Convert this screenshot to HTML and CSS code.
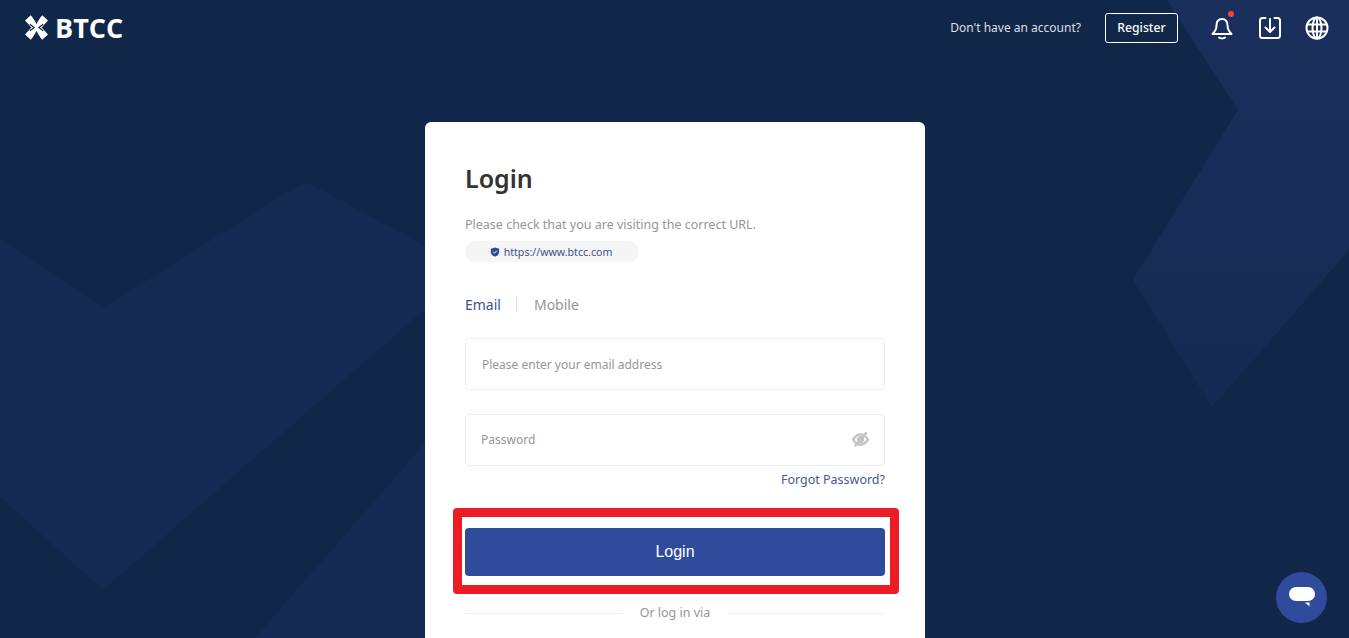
FILE: index.html
```html
<!DOCTYPE html>
<html lang="en">
<head>
    <meta charset="UTF-8">
    <meta name="viewport" content="width=device-width, initial-scale=1.0">
    <title>Login - BTCC</title>
    <link rel="stylesheet" href="styles.css">
</head>
<body>
    <!-- фоновые фигуры -->
    <svg class="bg-shapes" viewBox="0 0 1349 638" aria-hidden="true">
        <defs>
            <linearGradient id="shape-right" x1="0" y1="0" x2="0" y2="1">
                <stop offset="0" stop-color="#1a2f5b"/>
                <stop offset="1" stop-color="#142a52"/>
            </linearGradient>
        </defs>
        <path class="shape" d="M0 238 L103 308 L296 187 Q305 181 316 187 L470 270 L470 270 L103 590 L0 497 Z"/>
        <path class="shape" d="M425 443 L255 638 L470 638 L470 400 Z"/>
        <path fill="url(#shape-right)" d="M1167 0 L1238 110 L1133 280 L1212 407 L1349 250 L1349 0 Z"/>
    </svg>

    <header class="header">
        <a class="logo" href="#">
            <svg class="logo-mark" viewBox="0 0 24 26" aria-hidden="true">
                <path class="mark-x" d="M3 3 L21 23 M21 3 L3 23"/>
                <path class="mark-cut" d="M8.500 2 L12 8 L15.500 2 M8.500 24 L12 18 L15.500 24 M5 9.500 L9.500 13 L5 16.500 M19 9.500 L14.500 13 L19 16.500"/>
            </svg>
            <span class="logo-text">BTCC</span>
        </a>
        <div class="header-right">
            <span class="no-account">Don't have an account?</span>
            <a class="register" href="#">Register</a>
            <span class="icon-btn bell">
                <svg viewBox="0 0 24 24" aria-hidden="true">
                    <path d="M12 3 C8 3 6.500 6 6.500 9.500 C6.500 13.500 5 15.500 2.500 18 H21.500 C19 15.500 17.500 13.500 17.500 9.500 C17.500 6 16 3 12 3 Z"/>
                    <path d="M9 21.500 C10.500 22.700 13.500 22.700 15 21.500"/>
                </svg>
                <i class="dot"></i>
            </span>
            <span class="icon-btn download">
                <svg viewBox="0 0 24 24" aria-hidden="true">
                    <path d="M7.500 2 H4.500 Q2 2 2 4.500 V19.500 Q2 22 4.500 22 H19.500 Q22 22 22 19.500 V4.500 Q22 2 19.500 2 H16.500"/>
                    <path d="M12 3 V15.500 M7.500 11.500 L12 16 L16.500 11.500"/>
                </svg>
            </span>
            <span class="icon-btn">
                <svg viewBox="0 0 24 24" aria-hidden="true">
                    <circle cx="12" cy="12" r="10.500"/>
                    <ellipse cx="12" cy="12" rx="4.500" ry="10.500"/>
                    <path d="M12 1.500 V22.500 M2.200 8.500 H21.800 M2.200 15.500 H21.800"/>
                </svg>
            </span>
        </div>
    </header>

    <main class="card">
        <h1>Login</h1>
        <p class="hint">Please check that you are visiting the correct URL.</p>
        <div class="url-pill">
            <svg class="shield" viewBox="0 0 12 12" aria-hidden="true">
                <path d="M6 .5 L11 2 V6 C11 9 8.500 10.800 6 11.500 C3.500 10.800 1 9 1 6 V2 Z"/>
                <path class="tick" d="M3.800 5.800 L5.400 7.400 L8.300 4.500"/>
            </svg>
            <span>https://www.btcc.com</span>
        </div>

        <div class="tabs">
            <span class="tab active">Email</span>
            <span class="tab-sep"></span>
            <span class="tab">Mobile</span>
        </div>

        <form class="login-form">
            <input class="field email" type="text" placeholder="Please enter your email address">
            <div class="password-wrap">
                <input class="field password" type="password" placeholder="Password">
                <svg class="eye" viewBox="0 0 18 16" aria-hidden="true">
                    <path d="M1 8 C4 3.500 7 2.500 9 2.500 C11 2.500 14 3.500 17 8 C14 12.500 11 13.500 9 13.500 C7 13.500 4 12.500 1 8 Z"/>
                    <circle cx="9" cy="8" r="2.500"/>
                    <path d="M15.500 .5 L3 15.500"/>
                </svg>
            </div>
            <a class="forgot" href="#">Forgot Password?</a>
            <div class="submit-wrap">
                <button class="submit" type="button">Login</button>
                <span class="highlight"></span>
            </div>
        </form>

        <div class="or-line"><span>Or log in via</span></div>
    </main>

    <span class="chat-btn">
        <svg viewBox="0 0 26 22" aria-hidden="true">
            <rect x="0" y="0" width="26" height="14" rx="7"/>
            <path d="M16 15.500 L20.500 15.500 L20.500 19.500 Z"/>
        </svg>
    </span>
</body>
</html>
```

FILE: styles.css
```css
* {
    box-sizing: border-box;
}

html,
body {
    height: 100%;
    margin: 0;
    overflow: hidden;
}

body {
    position: relative;
    background: #11274a;
    color: #333;
    font-family: "Noto Sans", "Open Sans", sans-serif;
}

a {
    text-decoration: none;
}

.bg-shapes {
    position: absolute;
    inset: 0;
    width: 100%;
    height: 100%;
}

.shape {
    fill: #142a52;
}

.header {
    position: relative;
    display: flex;
    align-items: center;
    justify-content: space-between;
    height: 55px;
    padding: 0 20px 0 25px;
}

.logo {
    display: flex;
    align-items: center;
    gap: 7px;
    color: #fff;
}

.logo-mark {
    width: 23px;
    height: 25px;
}

.mark-x {
    fill: none;
    stroke: #fff;
    stroke-width: 8;
}

.mark-cut {
    fill: none;
    stroke: #11274a;
    stroke-width: 1.300;
}

.logo-text {
    font-family: "Open Sans", sans-serif;
    font-size: 27px;
    font-weight: 700;
    line-height: 1;
}

.header-right {
    display: flex;
    align-items: center;
}

.no-account {
    margin-right: 24px;
    color: #dcdfe5;
    font-size: 12px;
}

.register {
    display: flex;
    align-items: center;
    justify-content: center;
    width: 73px;
    height: 30px;
    margin-right: 32px;
    border: 1px solid #fff;
    border-radius: 3px;
    color: #fff;
    font-size: 12.200px;
    font-weight: 500;
}

.icon-btn {
    position: relative;
    display: block;
    width: 24px;
    height: 24px;
    margin-right: 24px;
}

.icon-btn.download {
    margin-right: 23px;
}

.icon-btn:last-child {
    margin-right: 0;
}

.icon-btn svg {
    display: block;
    width: 24px;
    height: 24px;
    fill: none;
    stroke: #fff;
    stroke-width: 2;
    stroke-linecap: round;
    stroke-linejoin: round;
}

.dot {
    position: absolute;
    top: -5px;
    right: 0;
    width: 6px;
    height: 6px;
    border-radius: 50%;
    background: #f44336;
}

.card {
    position: absolute;
    top: 122px;
    left: 425px;
    width: 500px;
    height: 516px;
    padding: 37px 40px 0;
    border-radius: 6px 6px 0 0;
    background: #fff;
}

h1 {
    margin: 0 0 19px;
    color: #333;
    font-size: 25px;
    font-weight: 600;
    line-height: 38px;
}

.hint {
    margin: 0 0 7px;
    color: #969696;
    font-size: 12.500px;
    line-height: 18px;
}

.url-pill {
    display: flex;
    align-items: center;
    justify-content: center;
    gap: 4px;
    width: 174px;
    height: 21px;
    padding-right: 2px;
    border-radius: 11px;
    background: #f5f5f5;
    color: #434f8c;
    font-size: 10.600px;
}

.shield {
    width: 10px;
    height: 10px;
    fill: #2f4a9e;
}

.tick {
    fill: none;
    stroke: #fff;
    stroke-width: 1.200;
}

.tabs {
    display: flex;
    align-items: center;
    height: 20px;
    margin: 32px 0 24px;
    font-size: 14px;
    color: #969696;
}

.tab.active {
    color: #434f8c;
}

.tab-sep {
    width: 1px;
    height: 16px;
    margin: 0 17px 0 15px;
    background: #ddd;
}

.login-form {
    display: flex;
    flex-direction: column;
}

.field {
    display: block;
    width: 100%;
    height: 52px;
    padding: 0 16px;
    border: 1px solid #eee;
    border-radius: 4px;
    outline: none;
    font-family: inherit;
    font-size: 12px;
}

.field::placeholder {
    color: #969696;
}

.email {
    margin-bottom: 24px;
}

.field.password {
    padding: 0 15px 2px;
}

.password-wrap {
    position: relative;
}

.eye {
    position: absolute;
    top: 18px;
    right: 16px;
    width: 17px;
    height: 15px;
    fill: none;
    stroke: #c4c4c4;
    stroke-width: 2.600;
}

.forgot {
    align-self: flex-end;
    margin-top: 5px;
    color: #4a5694;
    font-size: 12.500px;
    line-height: 18px;
}

.submit-wrap {
    position: relative;
    margin-top: 39px;
}

.submit {
    display: block;
    width: 100%;
    height: 48px;
    border: none;
    border-radius: 4px;
    background: #304a9c;
    color: #fff;
    font-family: "Liberation Sans", Arial, sans-serif;
    font-size: 16px;
}

/* красная рамка поверх кнопки */
.highlight {
    position: absolute;
    top: -20px;
    right: -14px;
    bottom: -18px;
    left: -12px;
    border: 9px solid #ed1c24;
    border-radius: 4px;
    pointer-events: none;
}

.or-line {
    display: flex;
    align-items: center;
    gap: 17px;
    margin-top: 28px;
    color: #969696;
    font-size: 12.500px;
    line-height: 18px;
}

.or-line::before,
.or-line::after {
    content: "";
    flex: 1;
    height: 1px;
    background: #f0f0f0;
}

.chat-btn {
    position: absolute;
    right: 22px;
    bottom: 15px;
    display: flex;
    align-items: center;
    justify-content: center;
    width: 51px;
    height: 51px;
    border-radius: 50%;
    background: #304a9c;
}

.chat-btn svg {
    width: 26px;
    height: 22px;
    fill: #fff;
}
```
